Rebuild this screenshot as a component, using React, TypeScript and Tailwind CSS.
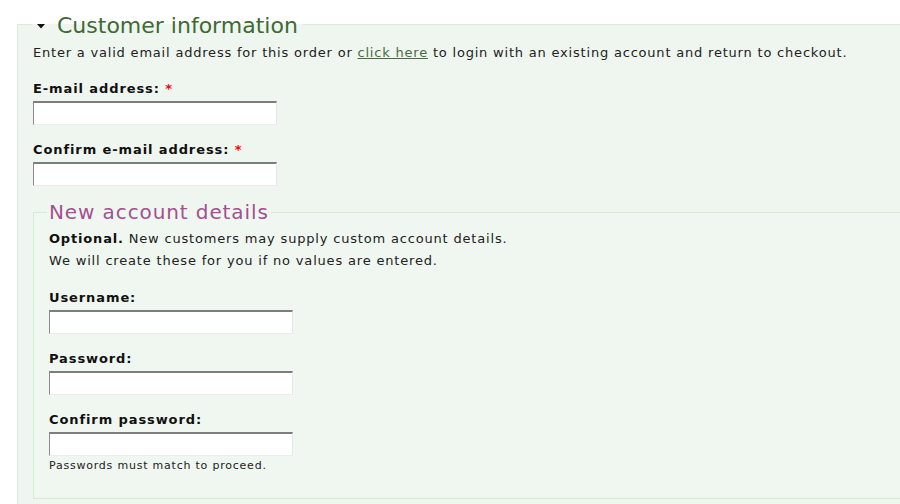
import React from "react";

const font = { fontFamily: '"DejaVu Sans", Verdana, sans-serif' };

function Field({ label, required, mt }: { label: string; required?: boolean; mt: string }) {
  return (
    <div className={mt}>
      <div className="h-[18px] text-[13px] leading-[18px] font-bold tracking-[0.9px] text-[#111]">
        {label}
        {required && <span className="text-[#ff0000]"> *</span>}
      </div>
      <div className="mt-[3px] h-[24px] w-[244px] bg-white border-t-2 border-l border-r border-b border-t-[#7d7d7d] border-l-[#8a8a8a] border-r-[#e6e6e6] border-b-[#ececec]" />
    </div>
  );
}

export default function App() {
  return (
    <div className="w-[900px] h-[504px] overflow-hidden bg-white pt-[11px]" style={font}>
      <fieldset className="ml-[17px] w-[1000px] h-[600px] border border-[#d7efd7] bg-[#eff6ef] px-[15px] min-w-0">
        <legend className="h-[26px] pt-[3px] flex items-center px-[5px] -ml-[1px]">
          <svg width="8" height="5" viewBox="0 0 8 5" className="mr-[12px] mt-[1px]">
            <path d="M0 0 H8 L4 4.5 Z" fill="#111" />
          </svg>
          <span className="text-[22px] leading-[23px] text-[#3e6a33]">Customer information</span>
        </legend>
        <p className="mt-[7px] text-[13px] leading-[18px] tracking-[0.8px] text-[#222]">
          Enter a valid email address for this order or{" "}
          <span className="underline text-[#4a6a45]">click here</span> to login with an existing account and return to checkout.
        </p>
        <Field label="E-mail address:" required mt="mt-[18px]" />
        <Field label="Confirm e-mail address:" required mt="mt-[16px]" />
        <fieldset className="mt-[14px] border border-[#d2edd2] bg-[#f0f7f0] px-[15px] pb-[25px] min-w-0">
          <legend className="h-[24px] px-[2px] -ml-[2px] text-[20px] leading-[24px] tracking-[0.9px] text-[#a4508f]">New account details</legend>
          <p className="mt-[4px] text-[13px] leading-[22px] tracking-[0.82px] text-[#222]">
            <span className="font-bold text-[#111]">Optional.</span> New customers may supply custom account details.
            <br />
            We will create these for you if no values are entered.
          </p>
          <Field label="Username:" mt="mt-[17px]" />
          <Field label="Password:" mt="mt-[16px]" />
          <Field label="Confirm password:" mt="mt-[16px]" />
          <div className="mt-[3px] h-[14px] text-[11px] leading-[14px] tracking-[0.78px] text-[#222]">Passwords must match to proceed.</div>
        </fieldset>
      </fieldset>
    </div>
  );
}
